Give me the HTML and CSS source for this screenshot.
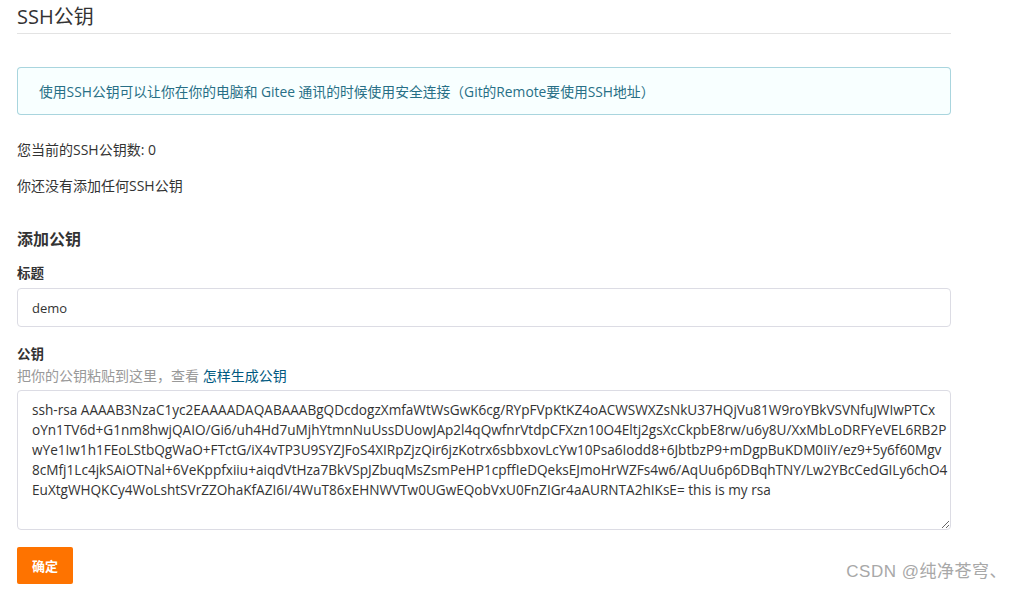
FILE: index.html
```html
<!DOCTYPE html>
<html lang="zh-CN">
<head>
<meta charset="utf-8">
<title>SSH公钥</title>
<link rel="stylesheet" href="styles.css">
</head>
<body>
<div class="page">
  <h1 class="title">SSH公钥</h1>
  <div class="alert">使用SSH公钥可以让你在你的电脑和 Gitee 通讯的时候使用安全连接（Git的Remote要使用SSH地址）</div>
  <p class="count">您当前的SSH公钥数: 0</p>
  <p class="empty">你还没有添加任何SSH公钥</p>
  <h2 class="subtitle">添加公钥</h2>
  <label class="label" for="title">标题</label>
  <input class="input" id="title" type="text" value="demo">
  <label class="label label-key" for="key">公钥</label>
  <div class="hint">把你的公钥粘贴到这里，查看 <a class="link" href="#">怎样生成公钥</a></div>
  <textarea class="textarea" id="key">ssh-rsa AAAAB3NzaC1yc2EAAAADAQABAAABgQDcdogzXmfaWtWsGwK6cg/RYpFVpKtKZ4oACWSWXZsNkU37HQjVu81W9roYBkVSVNfuJWIwPTCx
oYn1TV6d+G1nm8hwjQAIO/Gi6/uh4Hd7uMjhYtmnNuUssDUowJAp2l4qQwfnrVtdpCFXzn10O4Eltj2gsXcCkpbE8rw/u6y8U/XxMbLoDRFYeVEL6RB2P
wYe1Iw1h1FEoLStbQgWaO+FTctG/iX4vTP3U9SYZJFoS4XIRpZjzQir6jzKotrx6sbbxovLcYw10Psa6Iodd8+6JbtbzP9+mDgpBuKDM0IiY/ez9+5y6f60Mgv
8cMfj1Lc4jkSAiOTNal+6VeKppfxiiu+aiqdVtHza7BkVSpJZbuqMsZsmPeHP1cpffIeDQeksEJmoHrWZFs4w6/AqUu6p6DBqhTNY/Lw2YBcCedGILy6chO4
EuXtgWHQKCy4WoLshtSVrZZOhaKfAZI6I/4WuT86xEHNWVTw0UGwEQobVxU0FnZIGr4aAURNTA2hIKsE= this is my rsa</textarea>
  <button class="btn" type="button">确定</button>
</div>
<div class="watermark">CSDN @纯净苍穹、</div>
</body>
</html>
```
FILE: styles.css
```css
html, body {
  margin: 0;
  padding: 0;
  background: #ffffff;
}
body {
  font-family: "Open Sans", "Noto Sans CJK SC", sans-serif;
  font-size: 14px;
  color: #333333;
  width: 1019px;
  height: 591px;
  overflow: hidden;
  position: relative;
}
.page {
  margin-left: 17px;
  width: 934px;
  display: flex;
  flex-direction: column;
  align-items: stretch;
}
.title {
  margin: 5px 0 0;
  font-size: 20px;
  font-weight: 400;
  line-height: 24px;
  padding-bottom: 4px;
  border-bottom: 1px solid #e3e3e3;
  color: #333;
}
.alert {
  margin-top: 33px;
  height: 48px;
  box-sizing: border-box;
  padding-left: 22px;
  display: flex;
  align-items: center;
  background: #f8ffff;
  color: #276f86;
  font-size: 13.8px;
  border-radius: 4px;
  box-shadow: inset 0 0 0 1px #a9d5de;
}
.count, .empty {
  margin: 0;
  line-height: 20px;
}
.count { margin-top: 25px; }
.empty { margin-top: 16px; }
.subtitle {
  margin: 31px 0 0;
  font-size: 16px;
  line-height: 24px;
  font-weight: 700;
}
.label {
  margin-top: 12px;
  line-height: 20px;
  font-size: 13.5px;
  font-weight: 700;
}
.label-key { margin-top: 17px; }
.input {
  margin-top: 5px;
  height: 39px;
  box-sizing: border-box;
  border: 1px solid #dcdce4;
  border-radius: 4px;
  padding: 0 14px;
  font-family: inherit;
  font-size: 13px;
  color: #333;
  outline: none;
}
.hint {
  margin-top: 2px;
  line-height: 20px;
  color: #999999;
}
.link {
  color: #005980;
  text-decoration: none;
}
.textarea {
  margin-top: 4px;
  height: 140px;
  box-sizing: border-box;
  border: 1px solid #dcdce4;
  border-radius: 4px;
  padding: 9px 14px;
  font-family: inherit;
  font-size: 13.6px;
  line-height: 20px;
  color: #333;
  white-space: pre;
  overflow: hidden;
  resize: vertical;
  outline: none;
}
.btn {
  margin-top: 17px;
  align-self: flex-start;
  width: 56px;
  height: 37px;
  border: none;
  border-radius: 2px;
  background: #fe7300;
  color: #ffffff;
  font-family: inherit;
  font-size: 13px;
  font-weight: 700;
  padding: 0;
}
.watermark {
  position: absolute;
  right: 12px;
  top: 560px;
  font-family: "Liberation Sans", "Noto Sans CJK SC", sans-serif;
  font-size: 17px;
  letter-spacing: 0.5px;
  line-height: 24px;
  color: #a8a8a8;
}
```
